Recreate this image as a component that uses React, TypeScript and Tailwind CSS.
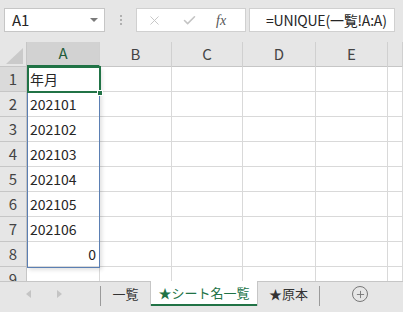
import { X, Check, Plus } from 'lucide-react'

const cols = ['A', 'B', 'C', 'D', 'E', '']
const rows: { n: string; a: string; right?: boolean }[] = [
  { n: '1', a: '年月' },
  { n: '2', a: '202101' },
  { n: '3', a: '202102' },
  { n: '4', a: '202103' },
  { n: '5', a: '202104' },
  { n: '6', a: '202105' },
  { n: '7', a: '202106' },
  { n: '8', a: '0', right: true },
  { n: '9', a: '' },
]

const gridCols = 'grid grid-cols-[27px_73px_72px_71px_73px_72px_1fr]'

export default function App() {
  return (
    <div className="w-[403px] h-[312px] overflow-hidden bg-[#e6e6e6] flex flex-col text-[#262626] font-['Noto_Sans_CJK_JP','Noto_Sans',sans-serif]">
      {/* 数式バー */}
      <div className="h-[42px] shrink-0 flex items-start pt-[8px] pl-[4px] pr-[8px]">
        <div className="w-[101px] h-[24px] bg-white border border-[#c6c6c6] flex items-center justify-between pl-[7px] pr-[6px] text-[15px]">
          <span>A1</span>
          <span className="w-0 h-0 border-l-[4px] border-r-[4px] border-t-[4px] border-l-transparent border-r-transparent border-t-[#7a7a7a]" />
        </div>
        <div className="w-[31px] h-[24px] flex flex-col items-center justify-center gap-[2px]">
          <span className="w-[2px] h-[2px] bg-[#b0b0b0]" />
          <span className="w-[2px] h-[2px] bg-[#b0b0b0]" />
          <span className="w-[2px] h-[2px] bg-[#b0b0b0]" />
        </div>
        <div className="w-[110px] h-[24px] bg-white border border-[#d0d0d0] flex items-center pl-[10px]">
          <X size={15} strokeWidth={1.5} className="text-[#c4c4c4]" />
          <Check size={15} strokeWidth={2.5} className="text-[#c4c4c4] ml-[20px]" />
          <span className="ml-[19px] text-[14px] italic text-[#555] font-['Liberation_Serif',serif]">fx</span>
        </div>
        <div className="ml-[3px] flex-1 min-w-0 h-[24px] bg-white border border-[#d0d0d0] flex items-center pl-[16px] text-[14px] whitespace-nowrap tracking-[-0.2px]">
          =UNIQUE(一覧!A:A)
        </div>
      </div>

      {/* シート */}
      <div className="relative flex-1 bg-white overflow-hidden">
        <div className={`${gridCols} h-[25px] bg-[#e6e6e6] border-b border-[#c6c6c6]`}>
          <div className="relative border-r border-[#c6c6c6]">
            <span className="absolute right-[3px] bottom-[3px] w-0 h-0 border-l-[17px] border-t-[16px] border-l-transparent border-t-transparent border-r-0 border-b-0 [border-bottom:16px_solid_#cacaca]" />
          </div>
          {cols.map((c, i) => (
            <div
              key={i}
              className={`flex items-center justify-center text-[15px] text-[#444] border-r border-[#d0d0d0] ${
                i === 0 ? 'bg-[#d2d2d2] !text-[#1e5c3a] border-b-2 border-b-[#217346]' : ''
              }`}
            >
              {c}
            </div>
          ))}
        </div>
        {rows.map((r) => (
          <div key={r.n} className={`${gridCols} h-[25px]`}>
            <div
              className={`flex items-center justify-center text-[15px] text-[#444] border-r border-b border-[#c6c6c6] ${
                r.n === '1' ? 'bg-[#dadada]' : 'bg-[#e6e6e6]'
              }`}
            >
              {r.n}
            </div>
            <div
              className={`flex items-center px-[3px] text-[14px] border-r border-b border-[#d9d9d9] ${
                r.right ? 'justify-end' : ''
              }`}
            >
              {r.a}
            </div>
            {cols.slice(1).map((_, i) => (
              <div key={i} className="border-r border-b border-[#d9d9d9]" />
            ))}
          </div>
        ))}

        {/* スピル範囲 */}
        <div className="absolute left-[27px] top-[25px] w-[73px] h-[201px] border border-[#5b7fb3] shadow-[2px_2px_4px_rgba(0,0,0,0.12)] pointer-events-none" />
        {/* アクティブセル */}
        <div className="absolute left-[27px] top-[24px] w-[74px] h-[27px] border-2 border-[#217346] pointer-events-none" />
        <div className="absolute left-[97px] top-[48px] w-[6px] h-[6px] bg-[#217346] border border-white pointer-events-none" />
      </div>

      {/* シート見出し */}
      <div className="h-[31px] shrink-0 flex items-start border-t border-[#c6c6c6] bg-[#e6e6e6] text-[13px]">
        <div className="w-[100px] h-[24px] flex items-center">
          <span className="ml-[26px] w-0 h-0 border-t-[4px] border-b-[4px] border-r-[5px] border-t-transparent border-b-transparent border-r-[#c4c4c4]" />
          <span className="ml-[26px] w-0 h-0 border-t-[4px] border-b-[4px] border-l-[5px] border-t-transparent border-b-transparent border-l-[#c4c4c4]" />
        </div>
        <div className="w-px h-[20px] mt-[4px] bg-[#9a9a9a]" />
        <div className="w-[49px] h-[24px] flex items-center justify-center text-[#333]">一覧</div>
        <div className="-mt-px w-[108px] h-[25px] bg-white border-l border-r border-[#c6c6c6] flex flex-col">
          <div className="flex-1 flex items-center justify-center text-[#217346]">★シート名一覧</div>
          <div className="h-[2px] bg-[#217346]" />
        </div>
        <div className="w-[61px] h-[24px] flex items-center justify-center text-[#333]">★原本</div>
        <div className="w-px h-[20px] mt-[4px] bg-[#9a9a9a]" />
        <div className="w-[80px] h-[24px] flex items-center justify-center">
          <span className="w-[16px] h-[16px] rounded-full border border-[#777] flex items-center justify-center">
            <Plus size={11} strokeWidth={2} className="text-[#777]" />
          </span>
        </div>
      </div>
    </div>
  )
}
